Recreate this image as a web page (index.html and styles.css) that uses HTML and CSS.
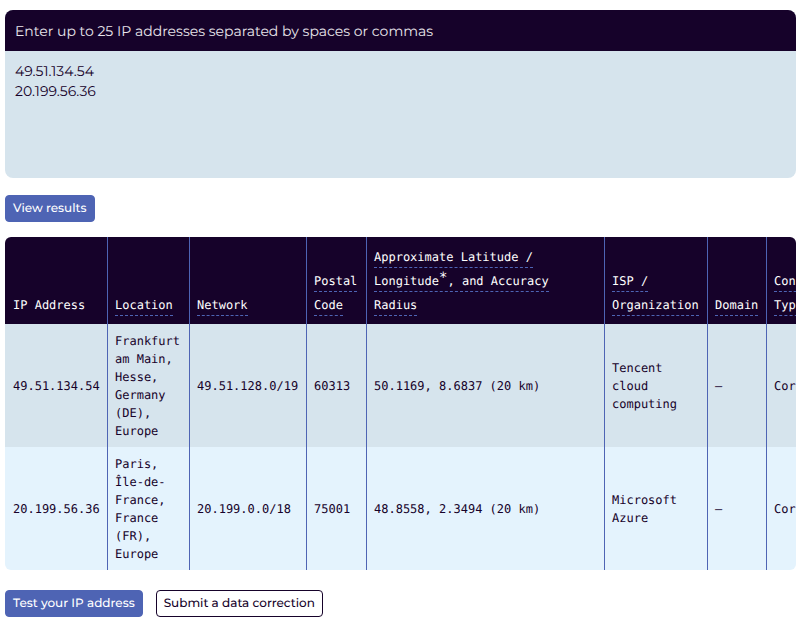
FILE: index.html
```html
<!DOCTYPE html>
<html lang="en">
<head>
  <meta charset="utf-8">
  <meta name="viewport" content="width=device-width, initial-scale=1">
  <title>IP address lookup</title>
  <link rel="stylesheet" href="styles.css">
</head>
<body>
  <main>
    <form class="lookup">
      <div class="lookup-box">
        <label class="lookup-label" for="ips">Enter up to 25 IP addresses separated by spaces or commas</label>
        <textarea class="lookup-input" id="ips" name="ips" spellcheck="false">49.51.134.54
20.199.56.36</textarea>
      </div>
      <button class="button" type="button">View results</button>
    </form>

    <div class="results">
      <table class="results-table">
        <colgroup>
          <col class="col-ip">
          <col class="col-location">
          <col class="col-network">
          <col class="col-postal">
          <col class="col-coords">
          <col class="col-isp">
          <col class="col-domain">
          <col class="col-connection">
        </colgroup>
        <thead>
          <tr>
            <th scope="col">IP Address</th>
            <th scope="col"><span class="term">Location</span></th>
            <th scope="col"><span class="term">Network</span></th>
            <th scope="col"><span class="term">Postal Code</span></th>
            <th scope="col"><span class="term">Approximate Latitude / Longitude<span class="mark">*</span>, and Accuracy Radius</span></th>
            <th scope="col"><span class="term">ISP / Organization</span></th>
            <th scope="col"><span class="term">Domain</span></th>
            <th scope="col"><span class="term">Connection Type</span></th>
          </tr>
        </thead>
        <tbody>
          <tr>
            <td>49.51.134.54</td>
            <td>Frankfurt am Main, Hesse, Germany (DE), Europe</td>
            <td>49.51.128.0/19</td>
            <td>60313</td>
            <td>50.1169, 8.6837 (20 km)</td>
            <td>Tencent cloud computing</td>
            <td>–</td>
            <td>Corporate</td>
          </tr>
          <tr>
            <td>20.199.56.36</td>
            <td>Paris, Île-de-France, France (FR), Europe</td>
            <td>20.199.0.0/18</td>
            <td>75001</td>
            <td>48.8558, 2.3494 (20 km)</td>
            <td>Microsoft Azure</td>
            <td>–</td>
            <td>Corporate</td>
          </tr>
        </tbody>
      </table>
    </div>

    <div class="actions">
      <button class="button" type="button">Test your IP address</button>
      <button class="button button-outline" type="button">Submit a data correction</button>
    </div>
  </main>
</body>
</html>
```
FILE: styles.css
```css
:root {
  --ink: #16022a;
  --blue: #4e64b4;
  --mist: #d6e4ed;
  --sky: #e4f3fd;
  --sans: Montserrat, Inter, "Liberation Sans", sans-serif;
  --mono: "DejaVu Sans Mono", "Liberation Mono", monospace;
}

* {
  box-sizing: border-box;
}

body {
  margin: 0;
  padding: 10px 7px 0 5px;
  background: #fff;
  color: var(--ink);
  font-family: var(--sans);
  text-rendering: geometricPrecision;
}

.lookup-box {
  display: flex;
  flex-direction: column;
  margin-bottom: 17px;
  border-radius: 8px;
  background: var(--mist);
  overflow: hidden;
}

.lookup-label {
  padding: 11px 10px 10px;
  background: var(--ink);
  color: #e9e6ec;
  font-size: 14px;
  line-height: 20px;
}

.lookup-input {
  height: 127px;
  padding: 10px;
  border: 0;
  outline: 0;
  background: transparent;
  color: var(--ink);
  font-family: inherit;
  font-size: 14px;
  line-height: 20px;
  text-rendering: inherit;
  resize: none;
}

.button {
  padding: 4px 7px;
  border: 1px solid var(--blue);
  border-radius: 4px;
  background: var(--blue);
  color: #fff;
  font-family: inherit;
  font-size: 12px;
  font-weight: 500;
  line-height: 17px;
  text-rendering: inherit;
}

.button-outline {
  border-color: var(--ink);
  background: #fff;
  color: var(--ink);
}

.results {
  margin: 15px 0 20px;
  border-radius: 6px;
  overflow: hidden;
}

.results-table {
  width: 860px;
  table-layout: fixed;
  border-collapse: separate;
  border-spacing: 0;
  font-family: var(--mono);
  font-size: 12px;
  line-height: 18px;
}

.col-ip { width: 103px; }
.col-location { width: 82px; }
.col-network { width: 117px; }
.col-postal { width: 60px; }
.col-coords { width: 238px; }
.col-isp { width: 103px; }
.col-domain { width: 59px; }

.results-table th,
.results-table td {
  padding: 8px 8px 7px 7px;
  border-right: 1px solid var(--blue);
  text-align: left;
}

.results-table th:first-child,
.results-table td:first-child {
  padding: 8px 7px 7px 8px;
}

.results-table th {
  background: var(--ink);
  color: #fff;
  font-weight: 400;
  line-height: 24px;
  vertical-align: bottom;
}

.results-table td {
  background: var(--mist);
  vertical-align: middle;
}

.results-table tbody tr:nth-child(even) td {
  background: var(--sky);
}

.term {
  padding-bottom: 3px;
  border-bottom: 1px dashed var(--blue);
}

.mark {
  font-size: 14px;
  line-height: 0;
  vertical-align: 3px;
}

.actions {
  display: flex;
  flex-wrap: wrap;
  gap: 13px;
}
```
